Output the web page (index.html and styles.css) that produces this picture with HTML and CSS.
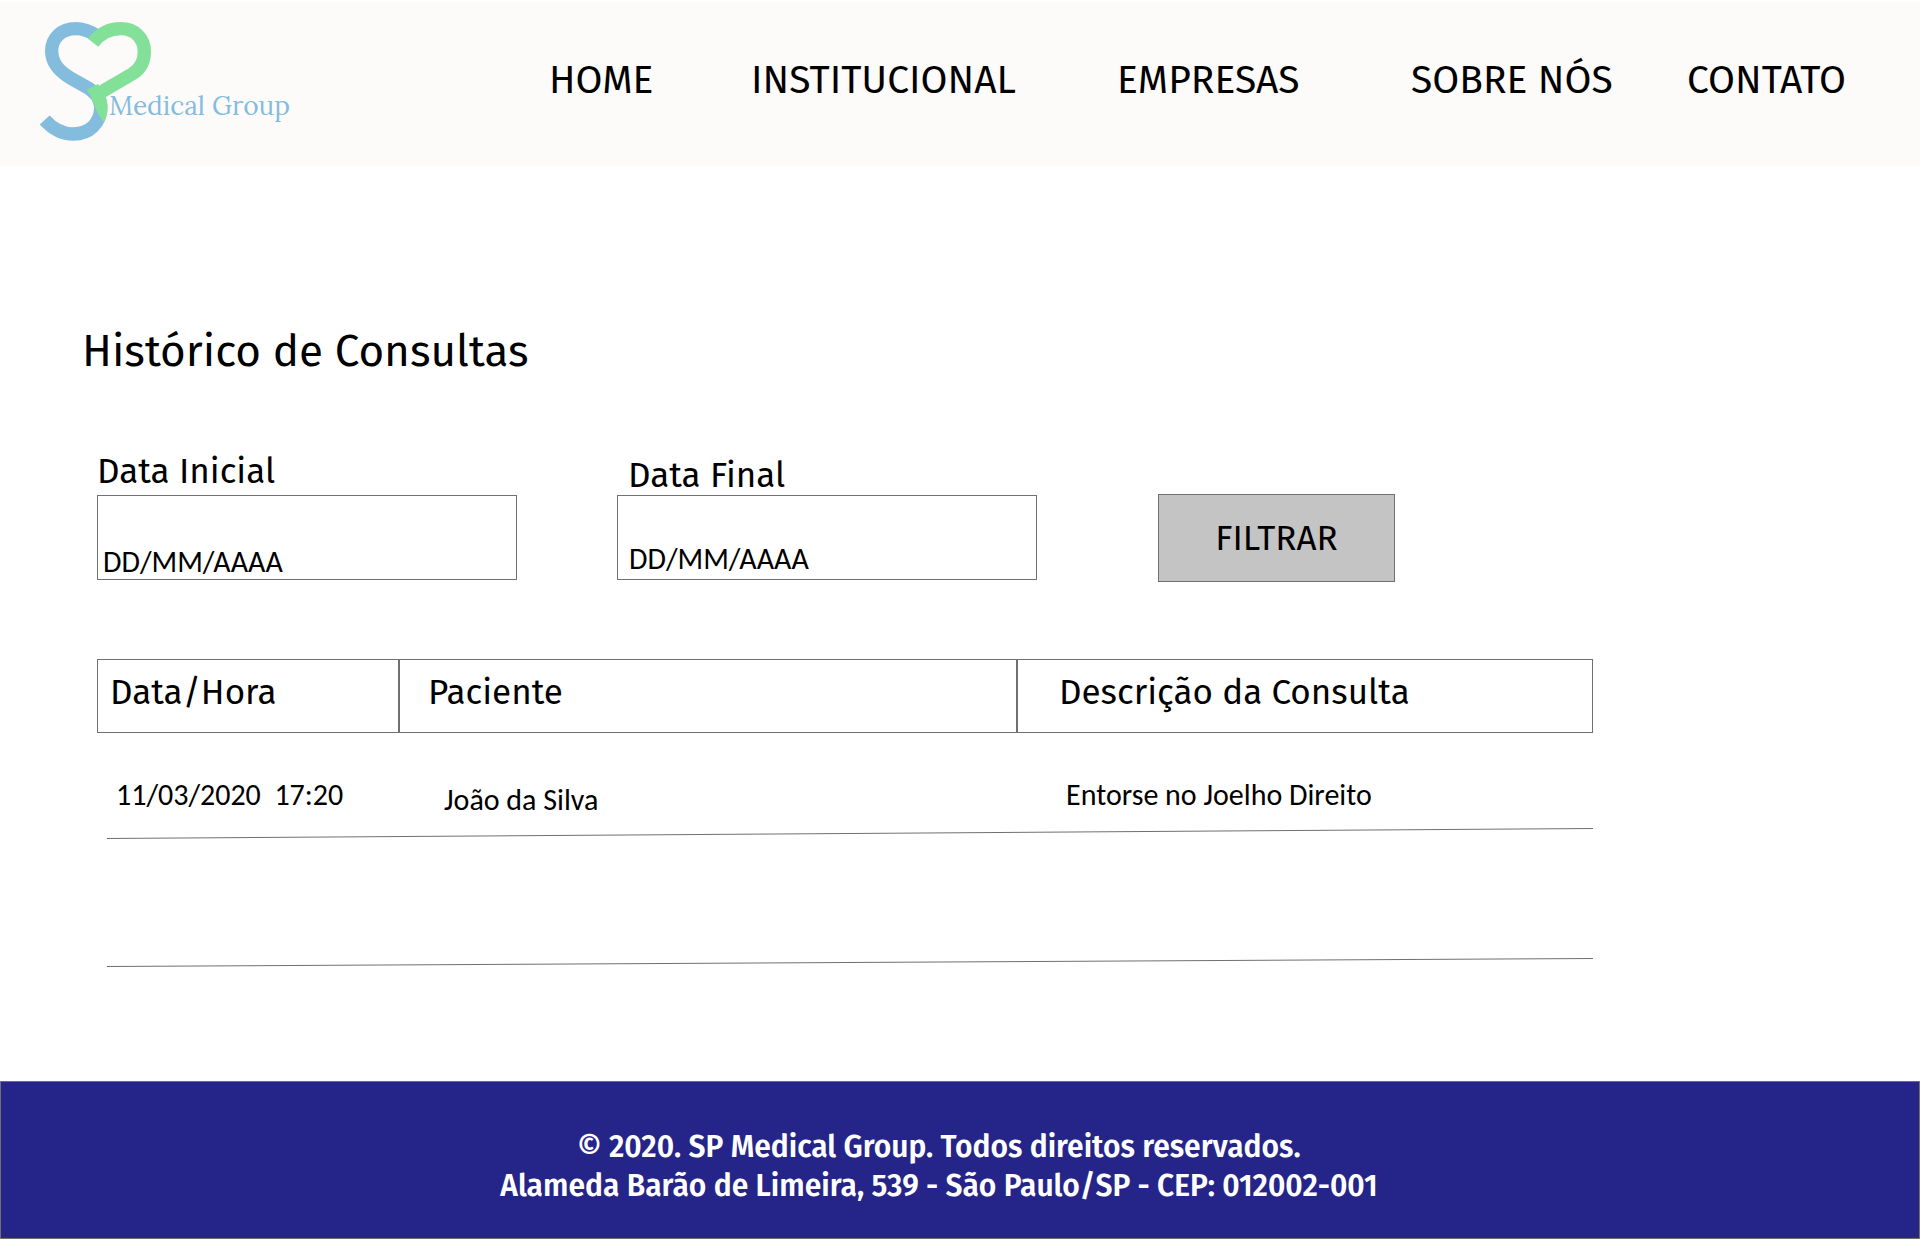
FILE: index.html
```html
<!DOCTYPE html>
<html lang="pt-BR">
<head>
  <meta charset="utf-8">
  <meta name="viewport" content="width=device-width, initial-scale=1">
  <title>SP Medical Group - Histórico de Consultas</title>
  <link rel="stylesheet" href="styles.css">
</head>
<body>
  <header class="header">
    <a class="logo" href="#" aria-label="SP Medical Group">
      <svg class="logo-image" viewBox="60 60 780 366">
        <path class="logo-s" d="M230 107 C207 92 190 86 167 86 C125 86 95 114 95 153 C95 190 117 214 155 236 L203 263 C230 280 242 298 242 322 C242 370 208 402 160 402 C125 402 98 387 74 360"/>
        <path class="logo-p" d="M219 128 C240 101 268 86 302 86 C345 86 373 115 373 155 C373 184 360 207 338 221 L244 276"/>
        <path class="logo-leaf" d="M200 269 L234 252 L256 288 C266 308 266 345 252 367 C240 352 230 335 222 315 C216 296 210 282 200 269 Z"/>
        <text class="logo-text" x="267" y="344">Medical Group</text>
      </svg>
    </a>
    <nav class="nav">
      <a href="#">HOME</a>
      <a href="#">INSTITUCIONAL</a>
      <a href="#">EMPRESAS</a>
      <a href="#">SOBRE NÓS</a>
      <a href="#">CONTATO</a>
    </nav>
  </header>

  <main class="main">
    <h1 class="title">Histórico de Consultas</h1>

    <div class="content">
      <form class="filter">
        <div class="field">
          <label for="data-inicial">Data Inicial</label>
          <input id="data-inicial" type="text" placeholder="DD/MM/AAAA">
        </div>
        <div class="field field-end">
          <label for="data-final">Data Final</label>
          <input id="data-final" type="text" placeholder="DD/MM/AAAA">
        </div>
        <button class="filter-button" type="button">FILTRAR</button>
      </form>

      <table class="table">
        <colgroup>
          <col class="col-date">
          <col class="col-patient">
          <col class="col-description">
        </colgroup>
        <thead>
          <tr>
            <th class="date" scope="col">Data/Hora</th>
            <th class="patient" scope="col">Paciente</th>
            <th class="description" scope="col">Descrição da Consulta</th>
          </tr>
        </thead>
        <tbody>
          <tr class="row">
            <td class="date">11/03/2020&nbsp; 17:20</td>
            <td class="patient">João da Silva</td>
            <td class="description">Entorse no Joelho Direito</td>
          </tr>
          <tr class="rule">
            <td colspan="3"><svg viewBox="0 0 1486 11" preserveAspectRatio="none" height="11" aria-hidden="true"><path d="M0 10.5 L1486 .5"/></svg></td>
          </tr>
          <tr class="row row-empty">
            <td></td>
            <td></td>
            <td></td>
          </tr>
          <tr class="rule">
            <td colspan="3"><svg viewBox="0 0 1486 9" preserveAspectRatio="none" height="9" aria-hidden="true"><path d="M0 8.5 L1486 .5"/></svg></td>
          </tr>
        </tbody>
      </table>
    </div>
  </main>

  <footer class="footer">
    <p>© 2020. SP Medical Group. Todos direitos reservados.</p>
    <p>Alameda Barão de Limeira, 539 - São Paulo/SP - CEP: 012002-001</p>
  </footer>
</body>
</html>
```
FILE: styles.css
```css
*,
*::before,
*::after {
  box-sizing: border-box;
}

body {
  display: flex;
  flex-direction: column;
  min-height: 100vh;
  margin: 0;
  background: #fff;
  color: #000;
  font-family: "Fira Sans", "Noto Sans", sans-serif;
}

/* Header */

.header {
  display: flex;
  align-items: flex-start;
  margin-top: 2px;
  padding: 18px 0 24px 40px;
  background: #fcfbf9;
}

.logo {
  flex: none;
  margin-right: 249px;
}

.logo-image {
  display: block;
  width: 260px;
  height: 122px;
}

.logo-s,
.logo-p {
  fill: none;
  stroke-width: 40;
}

.logo-s {
  stroke: #84bcde;
}

.logo-p {
  stroke: #83e098;
}

.logo-leaf {
  fill: #83e098;
}

.logo-text {
  fill: #84bcde;
  font-family: Lora, "Liberation Serif", serif;
  font-size: 79px;
}

.nav {
  flex: 1;
  display: grid;
  grid-template-columns: 202fr 366fr 294fr 276fr 233fr;
  padding-top: 36px;
}

.nav a {
  color: #000;
  font-size: 39px;
  line-height: 48px;
  text-decoration: none;
  white-space: nowrap;
}

/* Page content */

.main {
  flex: 1;
  padding: 160px 82px 114px;
}

.title {
  margin: 0 0 73px;
  font-size: 44px;
  font-weight: 400;
  line-height: 52px;
}

.content {
  max-width: 1511px;
  padding-left: 15px;
}

/* Filter */

.filter {
  display: flex;
  align-items: flex-end;
  margin-bottom: 77px;
}

.field {
  display: flex;
  flex-direction: column;
  gap: 4px;
  flex: 0 1 420px;
  margin: 0 100px 2px 0;
}

.field label {
  font-size: 35px;
  line-height: 40px;
}

.field input {
  width: 100%;
  height: 85px;
  padding: 48px 5px 0;
  border: 1px solid #707070;
  border-radius: 0;
  background: #fff;
  font-family: Calibri, Carlito, Lato, sans-serif;
  font-size: 30px;
}

.field input::placeholder {
  color: #000;
  opacity: 1;
}

.field-end {
  gap: 0;
  margin-right: 121px;
}

.field-end label {
  padding-left: 11px;
}

.field-end input {
  padding: 44px 11px 2px;
}

.filter-button {
  width: 237px;
  height: 88px;
  border: 1px solid #707070;
  border-radius: 0;
  background: #c4c4c4;
  color: #000;
  font-family: inherit;
  font-size: 35px;
}

/* Appointments table */

.table {
  width: 100%;
  border-collapse: separate;
  border-spacing: 0;
  table-layout: fixed;
}

.col-date {
  width: 302px;
}

.col-patient {
  width: 618px;
}

.table th {
  height: 74px;
  padding: 12px 0 20px;
  border: 1px solid #707070;
  font-size: 35px;
  font-weight: 400;
  line-height: 40px;
  text-align: left;
}

.table th.date {
  padding-left: 12px;
}

.table th.patient {
  padding-left: 28px;
}

.table th.description {
  padding-left: 41px;
}

.row td {
  height: 95px;
  padding: 44px 0 0;
  font-family: Calibri, Carlito, Lato, sans-serif;
  font-size: 30px;
  line-height: 36px;
  vertical-align: top;
}

.row .date {
  padding-left: 19px;
}

.row .patient {
  padding-top: 49px;
  padding-left: 45px;
}

.row .description {
  padding-left: 49px;
}

.row-empty td {
  height: 119px;
}

.rule td {
  padding: 0 0 0 10px;
}

.rule svg {
  display: block;
  width: 100%;
}

.rule path {
  fill: none;
  stroke: #707070;
  vector-effect: non-scaling-stroke;
}

/* Footer */

.footer {
  padding: 46px 42px 32px 0;
  border: 1px solid #707070;
  background: #252589;
  color: #fff;
  font-size: 30px;
  font-weight: 600;
  line-height: 39px;
  text-align: center;
}

.footer p {
  margin: 0;
}
```
